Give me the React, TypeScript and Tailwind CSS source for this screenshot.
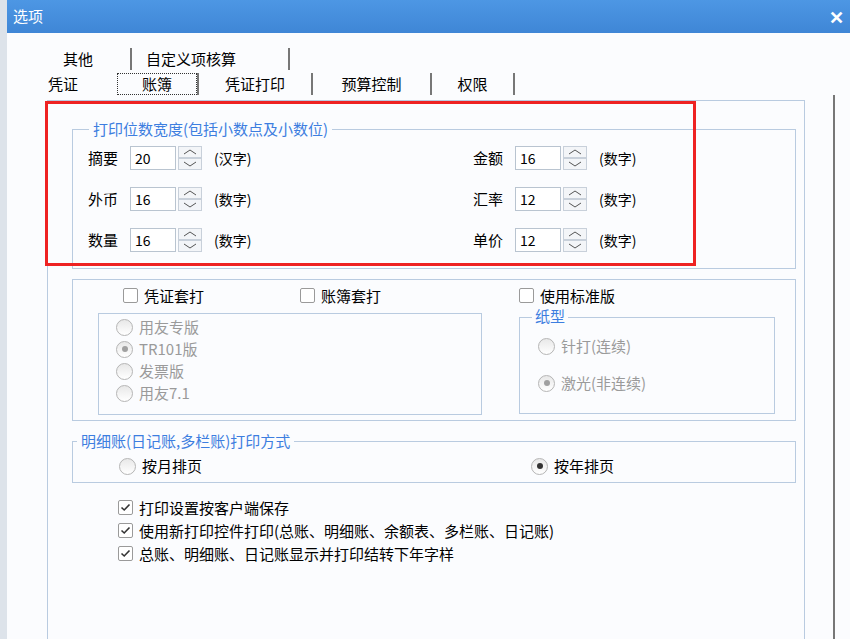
import React from "react";

const font = { fontFamily: '"Noto Sans CJK SC", "Noto Sans", sans-serif' };

function Spin({ label, value, suffix }: { label: string; value: string; suffix: string }) {
  return (
    <div className="flex items-center h-[24px]">
      <span className="w-[42px] text-[15px]">{label}</span>
      <div className="w-[46px] h-[24px] border border-[#b9c4d0] bg-white flex items-center pl-[4px] text-[14px]">{value}</div>
      <div className="ml-[2px] w-[24px] h-[24px] flex flex-col">
        <div className="flex-1 border border-[#c8d0da] bg-[#f3f5f8] flex items-center justify-center">
          <svg width="14" height="6" viewBox="0 0 14 6"><path d="M1 5 L7 1 L13 5" fill="none" stroke="#555" strokeWidth="1" /></svg>
        </div>
        <div className="flex-1 border border-[#c8d0da] bg-[#f3f5f8] flex items-center justify-center">
          <svg width="14" height="6" viewBox="0 0 14 6"><path d="M1 1 L7 5 L13 1" fill="none" stroke="#555" strokeWidth="1" /></svg>
        </div>
      </div>
      <span className="ml-[12px] text-[14px]">{suffix}</span>
    </div>
  );
}

function Radio({ checked, disabled, label }: { checked?: boolean; disabled?: boolean; label: string }) {
  return (
    <div className={`flex items-center gap-[6px] ${disabled ? "text-[#9a9a9a]" : "text-black"}`}>
      <span className="w-[17px] h-[17px] rounded-full border border-[#b5b5b5] bg-gradient-to-b from-[#e8e8e8] to-white flex items-center justify-center">
        {checked && <span className={`w-[6px] h-[6px] rounded-full ${disabled ? "bg-[#a0a0a0]" : "bg-[#333]"}`} />}
      </span>
      <span className="text-[15px] leading-[22px]">{label}</span>
    </div>
  );
}

function Check({ checked, label }: { checked?: boolean; label: string }) {
  return (
    <div className="flex items-center gap-[6px]">
      <span className="w-[15px] h-[15px] rounded-[2px] border border-[#9a9a9a] bg-white flex items-center justify-center">
        {checked && (
          <svg width="11" height="11" viewBox="0 0 11 11"><path d="M1.5 5.5 L4.2 8 L9.5 2.5" fill="none" stroke="#333" strokeWidth="1.6" /></svg>
        )}
      </span>
      <span className="text-[15px] leading-[21px]">{label}</span>
    </div>
  );
}

export default function App() {
  return (
    <div className="w-[850px] h-[639px] bg-[#e9edf2] relative overflow-hidden text-black" style={font}>
      <div className="absolute left-0 top-0 w-[8px] h-full bg-[#dde3ea]" />
      <div className="absolute left-[7px] top-0 right-0 bottom-0 flex flex-col">
        <div className="h-[33px] bg-gradient-to-b from-[#4d97e4] to-[#3f86d6] flex items-center justify-between px-[6px] text-white">
          <span className="text-[15px]">选项</span>
          <span className="text-[18px] font-bold">✕</span>
        </div>
        <div className="flex-1 bg-[#fbfcfe] relative">
          {/* tabs */}
          <div className="absolute left-[51px] top-[15px] flex text-[15px]">
            <span className="w-[72px] text-left pl-[5px]">其他</span>
            <span className="w-[2px] h-[22px] bg-[#777]" />
            <span className="w-[156px] text-left pl-[14px]">自定义项核算</span>
            <span className="w-[2px] h-[22px] bg-[#777]" />
          </div>
          <div className="absolute left-[40px] top-[40px] flex items-center text-[15px]">
            <span className="w-[70px] text-left pl-[1px]">凭证</span>
            <span className="w-[80px] text-center border border-dotted border-[#333] h-[22px] leading-[20px]">账簿</span>
            <span className="w-[2px] h-[22px] bg-[#777]" />
            <span className="w-[112px] text-center">凭证打印</span>
            <span className="w-[2px] h-[22px] bg-[#777]" />
            <span className="w-[117px] text-center">预算控制</span>
            <span className="w-[2px] h-[22px] bg-[#777]" />
            <span className="w-[81px] text-center">权限</span>
            <span className="w-[2px] h-[22px] bg-[#777]" />
          </div>
          <div className="absolute left-[826px] top-[62px] w-[2px] bottom-0 bg-[#777]" />
          {/* panel */}
          <div className="absolute left-[40px] top-[67px] w-[758px] h-[546px] border border-[#b9cbe0] bg-[#fbfcfe]">
            {/* group 1 */}
            <div className="absolute left-[24px] top-[28px] w-[724px] h-[140px] border border-[#b9cbe0]">
              <span className="absolute left-[16px] -top-[12px] bg-[#fbfcfe] px-[4px] text-[15px] text-[#3d7ee0]">打印位数宽度(包括小数点及小数位)</span>
              <div className="absolute left-[15px] top-[16px] flex flex-col gap-[17px]">
                <Spin label="摘要" value="20" suffix="(汉字)" />
                <Spin label="外币" value="16" suffix="(数字)" />
                <Spin label="数量" value="16" suffix="(数字)" />
              </div>
              <div className="absolute left-[400px] top-[16px] flex flex-col gap-[17px]">
                <Spin label="金额" value="16" suffix="(数字)" />
                <Spin label="汇率" value="12" suffix="(数字)" />
                <Spin label="单价" value="12" suffix="(数字)" />
              </div>
            </div>
            {/* group 2 */}
            <div className="absolute left-[24px] top-[178px] w-[724px] h-[142px] border border-[#b9cbe0]">
              <div className="absolute left-[50px] top-[5px]"><Check label="凭证套打" /></div>
              <div className="absolute left-[227px] top-[5px]"><Check label="账簿套打" /></div>
              <div className="absolute left-[446px] top-[5px]"><Check label="使用标准版" /></div>
              <div className="absolute left-[25px] top-[33px] w-[384px] h-[102px] border border-[#b9cbe0] pl-[17px] pt-[2px] flex flex-col gap-0">
                <Radio disabled label="用友专版" />
                <Radio disabled checked label="TR101版" />
                <Radio disabled label="发票版" />
                <Radio disabled label="用友7.1" />
              </div>
              <div className="absolute left-[446px] top-[37px] w-[256px] h-[97px] border border-[#b9cbe0]">
                <span className="absolute left-[12px] -top-[12px] bg-[#fbfcfe] px-[3px] text-[15px] leading-[20px] text-[#3d7ee0]">纸型</span>
                <div className="absolute left-[18px] top-[17px]"><Radio disabled label="针打(连续)" /></div>
                <div className="absolute left-[18px] top-[54px]"><Radio disabled checked label="激光(非连续)" /></div>
              </div>
            </div>
            {/* group 3 */}
            <div className="absolute left-[24px] top-[340px] w-[724px] h-[42px] border border-[#b9cbe0]">
              <span className="absolute left-[4px] -top-[12px] bg-[#fbfcfe] px-[4px] text-[15px] text-[#3d7ee0]">明细账(日记账,多栏账)打印方式</span>
              <div className="absolute left-[46px] top-[13px]"><Radio label="按月排页" /></div>
              <div className="absolute left-[458px] top-[13px]"><Radio checked label="按年排页" /></div>
            </div>
            <div className="absolute left-[70px] top-[396px] flex flex-col gap-[2px]">
              <Check checked label="打印设置按客户端保存" />
              <Check checked label="使用新打印控件打印(总账、明细账、余额表、多栏账、日记账)" />
              <Check checked label="总账、明细账、日记账显示并打印结转下年字样" />
            </div>
          </div>
          {/* red highlight */}
          <div className="absolute left-[38px] top-[68px] w-[651px] h-[165px] border-[3px] border-[#ee2222]" />
        </div>
      </div>
    </div>
  );
}
